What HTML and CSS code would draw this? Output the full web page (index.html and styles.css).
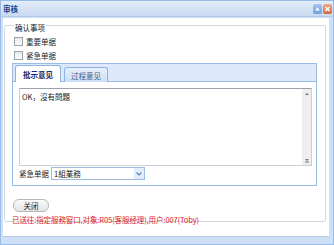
FILE: index.html
```html
<!DOCTYPE html>
<html>
<head>
<meta charset="utf-8">
<link rel="stylesheet" href="styles.css">
</head>
<body>
<div class="win">
  <div class="titlebar">
    <span class="title">审核</span>
    <div class="tools">
      <span class="tool collapse"><svg width="9" height="10" viewBox="0 0 9 10"><path d="M2 6.5 L4.5 3.5 L7 6.5 Z" fill="#fff"/></svg></span>
      <span class="tool close"><svg width="9" height="10" viewBox="0 0 9 10"><path d="M2.5 3 L6.5 7 M6.5 3 L2.5 7" stroke="#fff" stroke-width="1.6"/></svg></span>
    </div>
  </div>
  <div class="body">
    <fieldset class="fs">
      <legend class="lg">确认事项</legend>
      <label class="chk"><span class="box"></span>重要单据</label>
      <label class="chk"><span class="box"></span>紧急单据</label>
      <div class="tabpanel">
        <div class="tabstrip">
          <span class="tab active">批示意见</span>
          <span class="tab">过程意见</span>
        </div>
        <div class="tabbody">
          <div class="ta">
            <div class="ta-text">OK，沒有問題</div>
            <div class="sb">
              <svg width="8" height="6" viewBox="0 0 8 6"><path d="M2 4 L4 2 L6 4 Z" fill="#777"/></svg>
              <svg width="8" height="6" viewBox="0 0 8 6"><path d="M2 2 L4 4 L6 2 Z" fill="#777"/><path d="M2 5h4" stroke="#777" stroke-width="1"/></svg>
            </div>
          </div>
          <div class="selrow">
            <span class="sel-label">紧急单据</span>
            <div class="sel">
              <span class="sel-val">1組業務</span>
              <span class="sel-btn"><svg width="8" height="6" viewBox="0 0 8 6"><path d="M1.5 1.5 L4 4 L6.5 1.5" stroke="#5b83b8" stroke-width="1.2" fill="none"/></svg></span>
            </div>
          </div>
        </div>
      </div>
      <button class="btn">关闭</button>
      <div class="msg">已送往:指定服務窗口,对象:R05(客服经理),用户:007(Toby)</div>
    </fieldset>
  </div>
</div>
</body>
</html>
```
FILE: styles.css
```css
html, body {
  margin: 0;
  padding: 0;
  background: #fff;
}
body {
  font-family: "Noto Sans CJK SC", "Liberation Sans", sans-serif;
  font-size: 7.5px;
  color: #1a1a1a;
}
.win {
  width: 334px;
  height: 245px;
  box-sizing: border-box;
  border: 1px solid #99bbe8;
  background: #cfdff5;
  display: flex;
  flex-direction: column;
}
.titlebar {
  height: 15px;
  flex: none;
  display: flex;
  align-items: center;
  justify-content: space-between;
  padding: 0 1px 0 2px;
  background: linear-gradient(#e3edfa, #c9daf1);
  border-bottom: 1px solid #b3cbeb;
}
.title {
  font-weight: bold;
  color: #15428b;
  font-size: 7.5px;
  line-height: 10px;
}
.tools {
  display: flex;
  gap: 1px;
}
.tool {
  width: 9px;
  height: 10px;
  border-radius: 2px;
  display: block;
}
.tool svg { display: block; }
.collapse {
  background: linear-gradient(#a9c6f0, #6f9ee0);
}
.close {
  background: linear-gradient(#f0a98a, #d8683f);
}
.body {
  flex: 1;
  margin: 1px 4px 7px 2px;
  background: #fff;
  padding: 0 3px 0 1px;
  display: flex;
  flex-direction: column;
  border-bottom: 1px solid #b3cbeb;
}
.fs {
  margin: 1px 0 0 0;
  padding: 2px 7px 0 7px;
  border: 1px solid #d3d9e2;
  border-radius: 2px;
  height: 203px;
  box-sizing: border-box;
  min-width: 0;
}
.lg {
  padding: 5px 1px 0 1px;
  line-height: 8px;
  margin-left: 2px;
}
.chk {
  display: flex;
  align-items: center;
  height: 14px;
  padding-left: 2px;
  gap: 3px;
}
.box {
  width: 7px;
  height: 7px;
  border: 1px solid #9aa3ad;
  background: linear-gradient(#e6e9ed, #fafbfc);
  display: block;
}
.tabpanel {
  margin-top: 1px;
  border: 1px solid #99bbe8;
  width: 305px;
  box-sizing: border-box;
}
.tabstrip {
  height: 17px;
  background: #dde9fb;
  border-bottom: 1px solid #99bbe8;
  display: flex;
  align-items: flex-end;
  padding-left: 2px;
  gap: 3px;
}
.tab {
  height: 15px;
  box-sizing: border-box;
  border: 1px solid #8db2e3;
  border-bottom: none;
  border-radius: 3px 3px 0 0;
  padding: 0 6px;
  display: flex;
  align-items: center;
  color: #41618f;
  background: linear-gradient(#e8f0fc, #cddef7);
  margin-bottom: -1px;
}
.tab.active {
  height: 17px;
  background: #fff;
  color: #15286b;
  font-weight: bold;
  padding: 0 7px;
}
.tabbody {
  padding: 6px 4px 5px 6px;
  background: #fff;
}
.ta {
  height: 78px;
  border: 1px solid #c9d0d8;
  border-top-color: #9aa3ad;
  box-sizing: border-box;
  display: flex;
}
.ta-text {
  flex: 1;
  padding: 3px 2px;
  line-height: 10px;
}
.sb {
  width: 9px;
  background: #eeeeee;
  display: flex;
  flex-direction: column;
  justify-content: space-between;
  align-items: center;
  padding: 2px 0;
}
.sb svg { display: block; }
.selrow {
  display: flex;
  align-items: center;
  margin-top: 1px;
  gap: 1px;
}
.sel-label {
  width: 31px;
}
.sel {
  width: 94px;
  height: 13px;
  box-sizing: border-box;
  border: 1px solid #9fbbe0;
  display: flex;
  align-items: center;
}
.sel-val {
  flex: 1;
  padding-left: 2px;
}
.sel-btn {
  width: 10px;
  height: 11px;
  background: #e3ecf9;
  display: flex;
  align-items: center;
  justify-content: center;
}
.sel-btn svg { display: block; }
.btn {
  margin: 13px 0 0 1px;
  width: 36px;
  height: 13px;
  border: 1px solid #b9b9b9;
  border-radius: 6px;
  background: linear-gradient(#fafafa, #e4e4e4);
  font-family: inherit;
  font-size: 7.5px;
  color: #222;
  padding: 0;
  display: block;
}
.msg {
  color: #e0201b;
  margin-top: 3px;
  line-height: 10px;
  white-space: nowrap;
  letter-spacing: -0.1px;
}
```
